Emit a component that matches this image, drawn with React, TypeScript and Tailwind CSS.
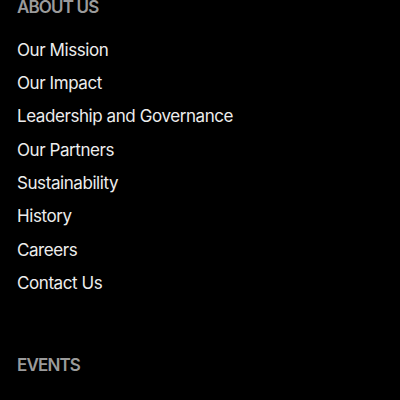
const LINKS = [
  'Our Mission',
  'Our Impact',
  'Leadership and Governance',
  'Our Partners',
  'Sustainability',
  'History',
  'Careers',
  'Contact Us',
]

export default function App() {
  return (
    <div className="h-[400px] w-[400px] overflow-hidden bg-black px-[17px] font-['Inter',sans-serif]">
      {/* About us */}
      <section className="-mt-[3px]">
        <h3 className="h-[20px] text-[17px] font-semibold uppercase leading-[20px] tracking-[-0.05em] text-[#9b9b9b]">
          About Us
        </h3>
        <ul className="mt-[16.5px] flex flex-col">
          {LINKS.map((l) => (
            <li key={l} className="flex h-[33.33px] items-center">
              <a href="#" className="text-[17px] leading-none tracking-[-0.025em] text-[#ededed]">
                {l}
              </a>
            </li>
          ))}
        </ul>
      </section>

      {/* Events */}
      <section className="mt-[55px]">
        <h3 className="h-[20px] text-[17px] font-semibold uppercase leading-[20px] tracking-[-0.05em] text-[#9b9b9b]">
          Events
        </h3>
      </section>
    </div>
  )
}
